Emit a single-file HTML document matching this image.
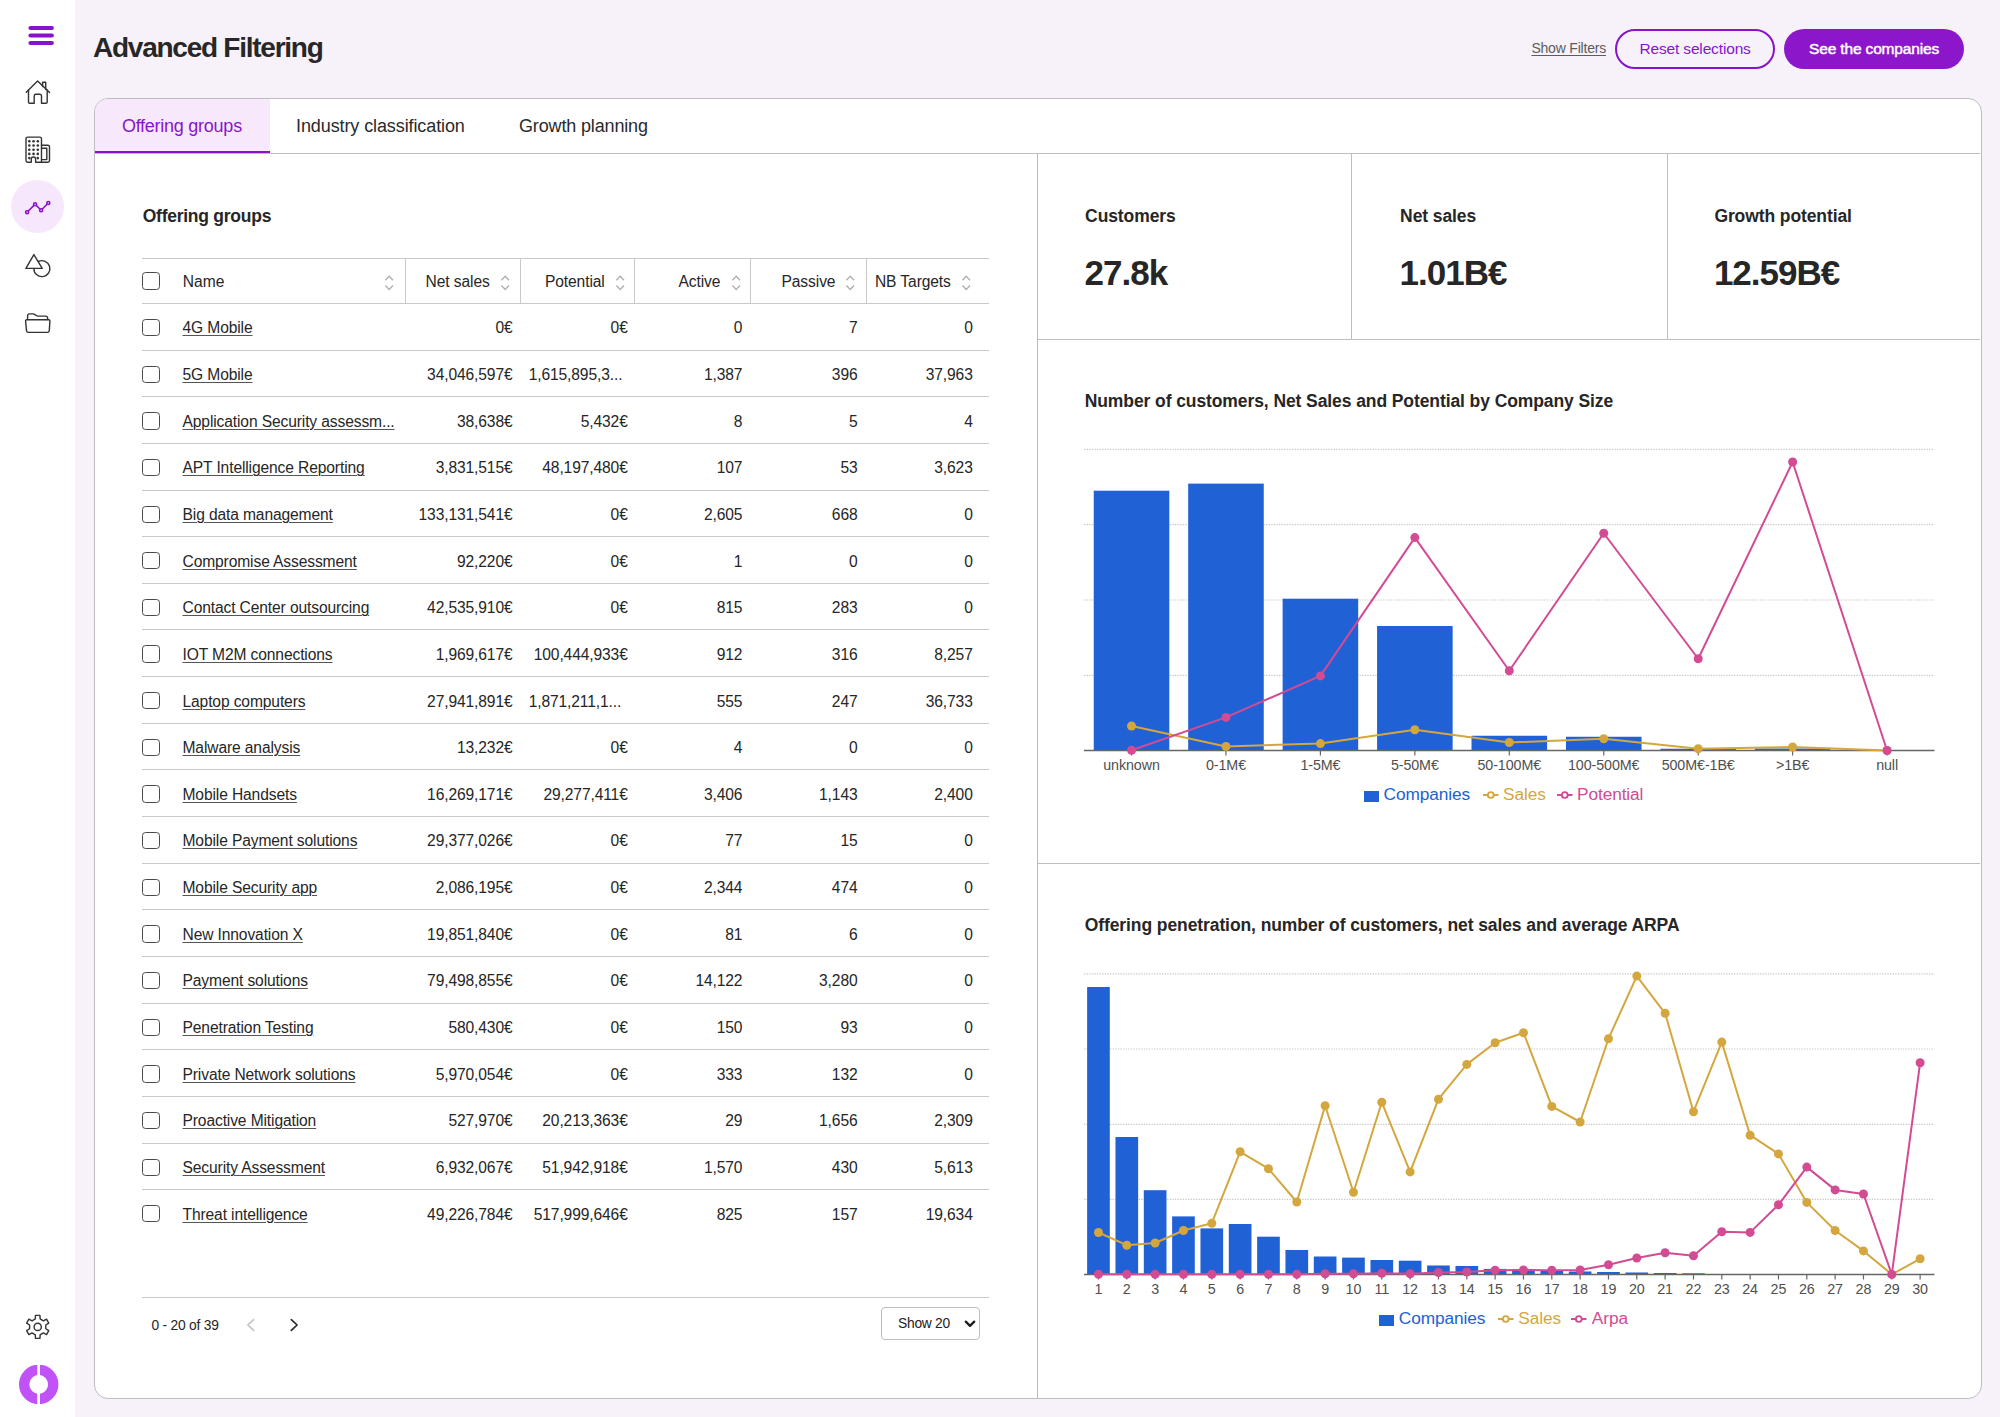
<!DOCTYPE html>
<html><head><meta charset="utf-8"><title>Advanced Filtering</title>
<style>
html,body{margin:0;padding:0;}
body{width:2000px;height:1417px;overflow:hidden;position:relative;background:#f7f2f9;font-family:"Liberation Sans", sans-serif;color:#262626;}
.u{text-decoration:underline;text-decoration-thickness:1.3px;text-underline-offset:2px;}
</style></head><body>

<div style="position:absolute;left:0;top:0;width:75px;height:1417px;background:#ffffff"></div>
<svg style="position:absolute;left:0;top:0" width="75" height="360" viewBox="0 0 75 360">
<g stroke="#8714cc" stroke-width="4.2" stroke-linecap="round">
<line x1="30.5" y1="28" x2="51.8" y2="28"/><line x1="30.5" y1="35.5" x2="51.8" y2="35.5"/><line x1="30.5" y1="43" x2="51.8" y2="43"/>
</g>
<g fill="none" stroke="#333" stroke-width="1.4" stroke-linejoin="round" stroke-linecap="round">
<!-- home -->
<path d="M26.3 92.2 L37.6 81 L49.6 92.5"/>
<path d="M28.5 90 V102 q0 1.2 1.2 1.2 H34.2 V96 q0 -1.7 1.7 -1.7 H39.8 q1.7 0 1.7 1.7 V103.2 H46 q1.2 0 1.2 -1.2 V90"/>
<path d="M42.6 86.6 V82.3 H45.7 V89.6"/>
<!-- building -->
<path d="M31.3 162.3 H27.7 q-1.7 0 -1.7 -1.7 V138.8 q0 -1.7 1.7 -1.7 H39.8 q1.7 0 1.7 1.7 V162.3 H35.6 V159.2 a2.15 2.15 0 0 0 -4.3 0 Z"/>
<path d="M41.5 145.3 H47.8 q1.7 0 1.7 1.7 V160.6 q0 1.7 -1.7 1.7 H41.5"/>
<path d="M41.5 148.3 H46.8 V159.6 H41.5"/>
<!-- shapes -->
<path d="M33.9 254.6 L42.2 268.4 H25.9 Z"/>
<path d="M33.9 268.4 A8 8 0 1 0 38.3 261.5"/>
<!-- folder -->
<path d="M27.6 319.6 V315.7 q0 -1.8 1.8 -1.8 H33 q1.2 0 2 0.7 l1.2 0.9 q0.8 0.6 1.8 0.6 H45.8 q1.8 0 1.8 1.8 V319.6"/>
<path d="M26.6 319.8 H48.8 q1.2 0 1.1 1.2 L49.3 330.6 q-0.2 1.8 -2 1.8 H28.5 q-1.8 0 -2 -1.8 L25.6 321 q-0.1 -1.2 1 -1.2 Z"/>
</g>
<g fill="#333">

<circle cx="29.30" cy="141.30" r="1.3"/>
<circle cx="33.55" cy="141.30" r="1.3"/>
<circle cx="37.80" cy="141.30" r="1.3"/>
<circle cx="29.30" cy="145.50" r="1.3"/>
<circle cx="33.55" cy="145.50" r="1.3"/>
<circle cx="37.80" cy="145.50" r="1.3"/>
<circle cx="29.30" cy="149.70" r="1.3"/>
<circle cx="33.55" cy="149.70" r="1.3"/>
<circle cx="37.80" cy="149.70" r="1.3"/>
<circle cx="29.30" cy="153.90" r="1.3"/>
<circle cx="33.55" cy="153.90" r="1.3"/>
<circle cx="37.80" cy="153.90" r="1.3"/>
<circle cx="29.30" cy="158.10" r="1.3"/>
<circle cx="37.80" cy="158.10" r="1.3"/>
</g>
</svg>
<div style="position:absolute;left:11px;top:180px;width:53.4px;height:53.4px;border-radius:50%;background:#f6e7fc"></div>
<svg style="position:absolute;left:0;top:180" width="75" height="60" viewBox="0 180 75 60">
<g fill="none" stroke="#8714cc" stroke-width="1.6">
<polyline points="27.1,212.3 35.1,204.2 41.1,210.2 48.3,203"/>
<circle cx="27.1" cy="212.3" r="1.5" fill="#f6e7fc"/><circle cx="35.1" cy="204.2" r="1.5" fill="#f6e7fc"/><circle cx="41.1" cy="210.2" r="1.5" fill="#f6e7fc"/><circle cx="48.3" cy="203" r="1.5" fill="#f6e7fc"/>
</g></svg>
<svg style="position:absolute;left:0;top:1290px" width="75" height="127" viewBox="0 1290 75 127">
<path d="M35.27 1318.96 L35.47 1315.41 L39.93 1315.41 L40.13 1318.96 L43.36 1320.83 L46.53 1319.22 L48.76 1323.09 L45.79 1325.03 L45.79 1328.77 L48.76 1330.71 L46.53 1334.58 L43.36 1332.97 L40.13 1334.84 L39.93 1338.39 L35.47 1338.39 L35.27 1334.84 L32.04 1332.97 L28.87 1334.58 L26.64 1330.71 L29.61 1328.77 L29.61 1325.03 L26.64 1323.09 L28.87 1319.22 L32.04 1320.83 Z" fill="none" stroke="#333" stroke-width="1.4" stroke-linejoin="round"/>
<circle cx="37.7" cy="1326.9" r="3.6" fill="none" stroke="#333" stroke-width="1.4"/>
<path fill-rule="evenodd" fill="#c152f7" d="M38.7 1364.7 a19.7 19.7 0 1 0 0.001 0 Z M38.7 1375.1 a9.3 9.3 0 1 1 -0.001 0 Z"/>
<rect x="37.3" y="1362" width="2.7" height="44" fill="#ffffff"/>
</svg>
<div style="position:absolute;top:34.00px;font-size:28px;line-height:28px;font-weight:700;color:#272727;white-space:nowrap;letter-spacing:-1.25px;left:93.00px;">Advanced Filtering</div>
<div style="position:absolute;top:41.35px;font-size:14px;line-height:14px;font-weight:400;color:#5c5c5c;white-space:nowrap;letter-spacing:-0.2px;left:1531.40px;text-decoration:underline;text-underline-offset:2px;">Show Filters</div>
<div style="position:absolute;left:1614.7px;top:28.8px;width:160.8px;height:40px;box-sizing:border-box;border:2px solid #8714cc;border-radius:20px"></div>
<div style="position:absolute;top:41.38px;font-size:15.5px;line-height:15.5px;font-weight:400;color:#8714cc;white-space:nowrap;letter-spacing:-0.15px;left:1639.40px;">Reset selections</div>
<div style="position:absolute;left:1784.4px;top:28.6px;width:179.9px;height:40.3px;border-radius:20.2px;background:#8c17ca"></div>
<div style="position:absolute;top:41.38px;font-size:15.5px;line-height:15.5px;font-weight:400;color:#ffffff;white-space:nowrap;letter-spacing:-0.15px;left:1809.00px;-webkit-text-stroke:0.45px #ffffff;">See the companies</div>
<div style="position:absolute;left:93.6px;top:98.3px;width:1888px;height:1300.6px;box-sizing:border-box;border:1.5px solid #bdbdbd;border-radius:14px;background:#fff;overflow:hidden"><div style="position:absolute;left:0;top:0;width:175px;height:52px;background:#f7e8fc"></div><div style="position:absolute;left:0;top:51.8px;width:175.4px;height:3.2px;background:#8714cc"></div></div>
<div style="position:absolute;left:94px;top:153px;width:1886px;height:1px;background:#bdbdbd"></div>
<div style="position:absolute;left:1037px;top:154px;width:1px;height:1244px;background:#bdbdbd"></div>
<div style="position:absolute;top:116.56px;font-size:18px;line-height:18px;font-weight:400;color:#8714cc;white-space:nowrap;letter-spacing:-0.25px;left:121.90px;">Offering groups</div>
<div style="position:absolute;top:116.76px;font-size:18px;line-height:18px;font-weight:400;color:#2a2a2a;white-space:nowrap;letter-spacing:-0.1px;left:296.00px;">Industry classification</div>
<div style="position:absolute;top:116.76px;font-size:18px;line-height:18px;font-weight:400;color:#2a2a2a;white-space:nowrap;letter-spacing:-0.15px;left:519.00px;">Growth planning</div>
<div style="position:absolute;top:208.49px;font-size:17.5px;line-height:17.5px;font-weight:700;color:#262626;white-space:nowrap;letter-spacing:-0.25px;left:142.70px;">Offering groups</div>
<div style="position:absolute;left:142px;top:258px;width:847px;height:1px;background:#c9c9c9"></div>
<div style="position:absolute;left:142px;top:303px;width:847px;height:1px;background:#c9c9c9"></div>
<div style="position:absolute;left:405px;top:259px;width:1px;height:44px;background:#c9c9c9"></div>
<div style="position:absolute;left:520px;top:259px;width:1px;height:44px;background:#c9c9c9"></div>
<div style="position:absolute;left:634px;top:259px;width:1px;height:44px;background:#c9c9c9"></div>
<div style="position:absolute;left:750px;top:259px;width:1px;height:44px;background:#c9c9c9"></div>
<div style="position:absolute;left:866px;top:259px;width:1px;height:44px;background:#c9c9c9"></div>
<div style="position:absolute;left:142.10px;top:272.30px;width:17.5px;height:17.3px;box-sizing:border-box;border:1.6px solid #4a4a4a;border-radius:3.5px;background:#fff"></div>
<div style="position:absolute;top:273.79px;font-size:15.6px;line-height:15.6px;font-weight:400;color:#262626;white-space:nowrap;left:182.80px;">Name</div>
<svg style="position:absolute;left:383.60px;top:275.10px" width="11" height="17" viewBox="-1 -1 11 17"><g fill="none" stroke="#b0b0b0" stroke-width="1.4"><polyline points="0.4,4.2 4.2,0.3 8,4.2"/><polyline points="0.4,9.6 4.2,13.6 8,9.6"/></g></svg>
<div style="position:absolute;top:273.79px;font-size:15.6px;line-height:15.6px;font-weight:400;color:#262626;white-space:nowrap;letter-spacing:-0.1px;right:1510.30px;text-align:right;">Net sales</div>
<svg style="position:absolute;left:499.60px;top:275.10px" width="11" height="17" viewBox="-1 -1 11 17"><g fill="none" stroke="#b0b0b0" stroke-width="1.4"><polyline points="0.4,4.2 4.2,0.3 8,4.2"/><polyline points="0.4,9.6 4.2,13.6 8,9.6"/></g></svg>
<div style="position:absolute;top:273.79px;font-size:15.6px;line-height:15.6px;font-weight:400;color:#262626;white-space:nowrap;letter-spacing:-0.1px;right:1395.30px;text-align:right;">Potential</div>
<svg style="position:absolute;left:615.10px;top:275.10px" width="11" height="17" viewBox="-1 -1 11 17"><g fill="none" stroke="#b0b0b0" stroke-width="1.4"><polyline points="0.4,4.2 4.2,0.3 8,4.2"/><polyline points="0.4,9.6 4.2,13.6 8,9.6"/></g></svg>
<div style="position:absolute;top:273.79px;font-size:15.6px;line-height:15.6px;font-weight:400;color:#262626;white-space:nowrap;letter-spacing:-0.1px;right:1279.70px;text-align:right;">Active</div>
<svg style="position:absolute;left:730.60px;top:275.10px" width="11" height="17" viewBox="-1 -1 11 17"><g fill="none" stroke="#b0b0b0" stroke-width="1.4"><polyline points="0.4,4.2 4.2,0.3 8,4.2"/><polyline points="0.4,9.6 4.2,13.6 8,9.6"/></g></svg>
<div style="position:absolute;top:273.79px;font-size:15.6px;line-height:15.6px;font-weight:400;color:#262626;white-space:nowrap;letter-spacing:-0.1px;right:1164.60px;text-align:right;">Passive</div>
<svg style="position:absolute;left:845.20px;top:275.10px" width="11" height="17" viewBox="-1 -1 11 17"><g fill="none" stroke="#b0b0b0" stroke-width="1.4"><polyline points="0.4,4.2 4.2,0.3 8,4.2"/><polyline points="0.4,9.6 4.2,13.6 8,9.6"/></g></svg>
<div style="position:absolute;top:273.79px;font-size:15.6px;line-height:15.6px;font-weight:400;color:#262626;white-space:nowrap;letter-spacing:-0.1px;right:1049.20px;text-align:right;">NB Targets</div>
<svg style="position:absolute;left:960.70px;top:275.10px" width="11" height="17" viewBox="-1 -1 11 17"><g fill="none" stroke="#b0b0b0" stroke-width="1.4"><polyline points="0.4,4.2 4.2,0.3 8,4.2"/><polyline points="0.4,9.6 4.2,13.6 8,9.6"/></g></svg>
<div style="position:absolute;left:142.10px;top:319.00px;width:17.5px;height:17.3px;box-sizing:border-box;border:1.6px solid #4a4a4a;border-radius:3.5px;background:#fff"></div>
<div style="position:absolute;top:320.39px;font-size:15.6px;line-height:15.6px;font-weight:400;color:#262626;white-space:nowrap;letter-spacing:-0.12px;left:182.50px;text-decoration:underline;text-decoration-thickness:1.3px;text-underline-offset:1.5px;text-decoration-color:#555;">4G Mobile</div>
<div style="position:absolute;top:320.39px;font-size:15.6px;line-height:15.6px;font-weight:400;color:#262626;white-space:nowrap;letter-spacing:-0.12px;right:1487.50px;text-align:right;">0€</div>
<div style="position:absolute;top:320.39px;font-size:15.6px;line-height:15.6px;font-weight:400;color:#262626;white-space:nowrap;letter-spacing:-0.12px;right:1372.30px;text-align:right;">0€</div>
<div style="position:absolute;top:320.39px;font-size:15.6px;line-height:15.6px;font-weight:400;color:#262626;white-space:nowrap;letter-spacing:-0.12px;right:1257.60px;text-align:right;">0</div>
<div style="position:absolute;top:320.39px;font-size:15.6px;line-height:15.6px;font-weight:400;color:#262626;white-space:nowrap;letter-spacing:-0.12px;right:1142.50px;text-align:right;">7</div>
<div style="position:absolute;top:320.39px;font-size:15.6px;line-height:15.6px;font-weight:400;color:#262626;white-space:nowrap;letter-spacing:-0.12px;right:1027.30px;text-align:right;">0</div>
<div style="position:absolute;left:142px;top:350px;width:847px;height:1px;background:#c9c9c9"></div>
<div style="position:absolute;left:142.10px;top:365.64px;width:17.5px;height:17.3px;box-sizing:border-box;border:1.6px solid #4a4a4a;border-radius:3.5px;background:#fff"></div>
<div style="position:absolute;top:367.03px;font-size:15.6px;line-height:15.6px;font-weight:400;color:#262626;white-space:nowrap;letter-spacing:-0.12px;left:182.50px;text-decoration:underline;text-decoration-thickness:1.3px;text-underline-offset:1.5px;text-decoration-color:#555;">5G Mobile</div>
<div style="position:absolute;top:367.03px;font-size:15.6px;line-height:15.6px;font-weight:400;color:#262626;white-space:nowrap;letter-spacing:-0.12px;right:1487.50px;text-align:right;">34,046,597€</div>
<div style="position:absolute;top:367.03px;font-size:15.6px;line-height:15.6px;font-weight:400;color:#262626;white-space:nowrap;letter-spacing:-0.12px;left:528.70px;">1,615,895,3...</div>
<div style="position:absolute;top:367.03px;font-size:15.6px;line-height:15.6px;font-weight:400;color:#262626;white-space:nowrap;letter-spacing:-0.12px;right:1257.60px;text-align:right;">1,387</div>
<div style="position:absolute;top:367.03px;font-size:15.6px;line-height:15.6px;font-weight:400;color:#262626;white-space:nowrap;letter-spacing:-0.12px;right:1142.50px;text-align:right;">396</div>
<div style="position:absolute;top:367.03px;font-size:15.6px;line-height:15.6px;font-weight:400;color:#262626;white-space:nowrap;letter-spacing:-0.12px;right:1027.30px;text-align:right;">37,963</div>
<div style="position:absolute;left:142px;top:396px;width:847px;height:1px;background:#c9c9c9"></div>
<div style="position:absolute;left:142.10px;top:412.28px;width:17.5px;height:17.3px;box-sizing:border-box;border:1.6px solid #4a4a4a;border-radius:3.5px;background:#fff"></div>
<div style="position:absolute;top:413.67px;font-size:15.6px;line-height:15.6px;font-weight:400;color:#262626;white-space:nowrap;letter-spacing:-0.12px;left:182.50px;text-decoration:underline;text-decoration-thickness:1.3px;text-underline-offset:1.5px;text-decoration-color:#555;">Application Security assessm...</div>
<div style="position:absolute;top:413.67px;font-size:15.6px;line-height:15.6px;font-weight:400;color:#262626;white-space:nowrap;letter-spacing:-0.12px;right:1487.50px;text-align:right;">38,638€</div>
<div style="position:absolute;top:413.67px;font-size:15.6px;line-height:15.6px;font-weight:400;color:#262626;white-space:nowrap;letter-spacing:-0.12px;right:1372.30px;text-align:right;">5,432€</div>
<div style="position:absolute;top:413.67px;font-size:15.6px;line-height:15.6px;font-weight:400;color:#262626;white-space:nowrap;letter-spacing:-0.12px;right:1257.60px;text-align:right;">8</div>
<div style="position:absolute;top:413.67px;font-size:15.6px;line-height:15.6px;font-weight:400;color:#262626;white-space:nowrap;letter-spacing:-0.12px;right:1142.50px;text-align:right;">5</div>
<div style="position:absolute;top:413.67px;font-size:15.6px;line-height:15.6px;font-weight:400;color:#262626;white-space:nowrap;letter-spacing:-0.12px;right:1027.30px;text-align:right;">4</div>
<div style="position:absolute;left:142px;top:443px;width:847px;height:1px;background:#c9c9c9"></div>
<div style="position:absolute;left:142.10px;top:458.92px;width:17.5px;height:17.3px;box-sizing:border-box;border:1.6px solid #4a4a4a;border-radius:3.5px;background:#fff"></div>
<div style="position:absolute;top:460.31px;font-size:15.6px;line-height:15.6px;font-weight:400;color:#262626;white-space:nowrap;letter-spacing:-0.12px;left:182.50px;text-decoration:underline;text-decoration-thickness:1.3px;text-underline-offset:1.5px;text-decoration-color:#555;">APT Intelligence Reporting</div>
<div style="position:absolute;top:460.31px;font-size:15.6px;line-height:15.6px;font-weight:400;color:#262626;white-space:nowrap;letter-spacing:-0.12px;right:1487.50px;text-align:right;">3,831,515€</div>
<div style="position:absolute;top:460.31px;font-size:15.6px;line-height:15.6px;font-weight:400;color:#262626;white-space:nowrap;letter-spacing:-0.12px;right:1372.30px;text-align:right;">48,197,480€</div>
<div style="position:absolute;top:460.31px;font-size:15.6px;line-height:15.6px;font-weight:400;color:#262626;white-space:nowrap;letter-spacing:-0.12px;right:1257.60px;text-align:right;">107</div>
<div style="position:absolute;top:460.31px;font-size:15.6px;line-height:15.6px;font-weight:400;color:#262626;white-space:nowrap;letter-spacing:-0.12px;right:1142.50px;text-align:right;">53</div>
<div style="position:absolute;top:460.31px;font-size:15.6px;line-height:15.6px;font-weight:400;color:#262626;white-space:nowrap;letter-spacing:-0.12px;right:1027.30px;text-align:right;">3,623</div>
<div style="position:absolute;left:142px;top:490px;width:847px;height:1px;background:#c9c9c9"></div>
<div style="position:absolute;left:142.10px;top:505.56px;width:17.5px;height:17.3px;box-sizing:border-box;border:1.6px solid #4a4a4a;border-radius:3.5px;background:#fff"></div>
<div style="position:absolute;top:506.95px;font-size:15.6px;line-height:15.6px;font-weight:400;color:#262626;white-space:nowrap;letter-spacing:-0.12px;left:182.50px;text-decoration:underline;text-decoration-thickness:1.3px;text-underline-offset:1.5px;text-decoration-color:#555;">Big data management</div>
<div style="position:absolute;top:506.95px;font-size:15.6px;line-height:15.6px;font-weight:400;color:#262626;white-space:nowrap;letter-spacing:-0.12px;right:1487.50px;text-align:right;">133,131,541€</div>
<div style="position:absolute;top:506.95px;font-size:15.6px;line-height:15.6px;font-weight:400;color:#262626;white-space:nowrap;letter-spacing:-0.12px;right:1372.30px;text-align:right;">0€</div>
<div style="position:absolute;top:506.95px;font-size:15.6px;line-height:15.6px;font-weight:400;color:#262626;white-space:nowrap;letter-spacing:-0.12px;right:1257.60px;text-align:right;">2,605</div>
<div style="position:absolute;top:506.95px;font-size:15.6px;line-height:15.6px;font-weight:400;color:#262626;white-space:nowrap;letter-spacing:-0.12px;right:1142.50px;text-align:right;">668</div>
<div style="position:absolute;top:506.95px;font-size:15.6px;line-height:15.6px;font-weight:400;color:#262626;white-space:nowrap;letter-spacing:-0.12px;right:1027.30px;text-align:right;">0</div>
<div style="position:absolute;left:142px;top:536px;width:847px;height:1px;background:#c9c9c9"></div>
<div style="position:absolute;left:142.10px;top:552.20px;width:17.5px;height:17.3px;box-sizing:border-box;border:1.6px solid #4a4a4a;border-radius:3.5px;background:#fff"></div>
<div style="position:absolute;top:553.59px;font-size:15.6px;line-height:15.6px;font-weight:400;color:#262626;white-space:nowrap;letter-spacing:-0.12px;left:182.50px;text-decoration:underline;text-decoration-thickness:1.3px;text-underline-offset:1.5px;text-decoration-color:#555;">Compromise Assessment</div>
<div style="position:absolute;top:553.59px;font-size:15.6px;line-height:15.6px;font-weight:400;color:#262626;white-space:nowrap;letter-spacing:-0.12px;right:1487.50px;text-align:right;">92,220€</div>
<div style="position:absolute;top:553.59px;font-size:15.6px;line-height:15.6px;font-weight:400;color:#262626;white-space:nowrap;letter-spacing:-0.12px;right:1372.30px;text-align:right;">0€</div>
<div style="position:absolute;top:553.59px;font-size:15.6px;line-height:15.6px;font-weight:400;color:#262626;white-space:nowrap;letter-spacing:-0.12px;right:1257.60px;text-align:right;">1</div>
<div style="position:absolute;top:553.59px;font-size:15.6px;line-height:15.6px;font-weight:400;color:#262626;white-space:nowrap;letter-spacing:-0.12px;right:1142.50px;text-align:right;">0</div>
<div style="position:absolute;top:553.59px;font-size:15.6px;line-height:15.6px;font-weight:400;color:#262626;white-space:nowrap;letter-spacing:-0.12px;right:1027.30px;text-align:right;">0</div>
<div style="position:absolute;left:142px;top:583px;width:847px;height:1px;background:#c9c9c9"></div>
<div style="position:absolute;left:142.10px;top:598.84px;width:17.5px;height:17.3px;box-sizing:border-box;border:1.6px solid #4a4a4a;border-radius:3.5px;background:#fff"></div>
<div style="position:absolute;top:600.23px;font-size:15.6px;line-height:15.6px;font-weight:400;color:#262626;white-space:nowrap;letter-spacing:-0.12px;left:182.50px;text-decoration:underline;text-decoration-thickness:1.3px;text-underline-offset:1.5px;text-decoration-color:#555;">Contact Center outsourcing</div>
<div style="position:absolute;top:600.23px;font-size:15.6px;line-height:15.6px;font-weight:400;color:#262626;white-space:nowrap;letter-spacing:-0.12px;right:1487.50px;text-align:right;">42,535,910€</div>
<div style="position:absolute;top:600.23px;font-size:15.6px;line-height:15.6px;font-weight:400;color:#262626;white-space:nowrap;letter-spacing:-0.12px;right:1372.30px;text-align:right;">0€</div>
<div style="position:absolute;top:600.23px;font-size:15.6px;line-height:15.6px;font-weight:400;color:#262626;white-space:nowrap;letter-spacing:-0.12px;right:1257.60px;text-align:right;">815</div>
<div style="position:absolute;top:600.23px;font-size:15.6px;line-height:15.6px;font-weight:400;color:#262626;white-space:nowrap;letter-spacing:-0.12px;right:1142.50px;text-align:right;">283</div>
<div style="position:absolute;top:600.23px;font-size:15.6px;line-height:15.6px;font-weight:400;color:#262626;white-space:nowrap;letter-spacing:-0.12px;right:1027.30px;text-align:right;">0</div>
<div style="position:absolute;left:142px;top:629px;width:847px;height:1px;background:#c9c9c9"></div>
<div style="position:absolute;left:142.10px;top:645.48px;width:17.5px;height:17.3px;box-sizing:border-box;border:1.6px solid #4a4a4a;border-radius:3.5px;background:#fff"></div>
<div style="position:absolute;top:646.87px;font-size:15.6px;line-height:15.6px;font-weight:400;color:#262626;white-space:nowrap;letter-spacing:-0.12px;left:182.50px;text-decoration:underline;text-decoration-thickness:1.3px;text-underline-offset:1.5px;text-decoration-color:#555;">IOT M2M connections</div>
<div style="position:absolute;top:646.87px;font-size:15.6px;line-height:15.6px;font-weight:400;color:#262626;white-space:nowrap;letter-spacing:-0.12px;right:1487.50px;text-align:right;">1,969,617€</div>
<div style="position:absolute;top:646.87px;font-size:15.6px;line-height:15.6px;font-weight:400;color:#262626;white-space:nowrap;letter-spacing:-0.12px;right:1372.30px;text-align:right;">100,444,933€</div>
<div style="position:absolute;top:646.87px;font-size:15.6px;line-height:15.6px;font-weight:400;color:#262626;white-space:nowrap;letter-spacing:-0.12px;right:1257.60px;text-align:right;">912</div>
<div style="position:absolute;top:646.87px;font-size:15.6px;line-height:15.6px;font-weight:400;color:#262626;white-space:nowrap;letter-spacing:-0.12px;right:1142.50px;text-align:right;">316</div>
<div style="position:absolute;top:646.87px;font-size:15.6px;line-height:15.6px;font-weight:400;color:#262626;white-space:nowrap;letter-spacing:-0.12px;right:1027.30px;text-align:right;">8,257</div>
<div style="position:absolute;left:142px;top:676px;width:847px;height:1px;background:#c9c9c9"></div>
<div style="position:absolute;left:142.10px;top:692.12px;width:17.5px;height:17.3px;box-sizing:border-box;border:1.6px solid #4a4a4a;border-radius:3.5px;background:#fff"></div>
<div style="position:absolute;top:693.51px;font-size:15.6px;line-height:15.6px;font-weight:400;color:#262626;white-space:nowrap;letter-spacing:-0.12px;left:182.50px;text-decoration:underline;text-decoration-thickness:1.3px;text-underline-offset:1.5px;text-decoration-color:#555;">Laptop computers</div>
<div style="position:absolute;top:693.51px;font-size:15.6px;line-height:15.6px;font-weight:400;color:#262626;white-space:nowrap;letter-spacing:-0.12px;right:1487.50px;text-align:right;">27,941,891€</div>
<div style="position:absolute;top:693.51px;font-size:15.6px;line-height:15.6px;font-weight:400;color:#262626;white-space:nowrap;letter-spacing:-0.12px;left:528.70px;">1,871,211,1...</div>
<div style="position:absolute;top:693.51px;font-size:15.6px;line-height:15.6px;font-weight:400;color:#262626;white-space:nowrap;letter-spacing:-0.12px;right:1257.60px;text-align:right;">555</div>
<div style="position:absolute;top:693.51px;font-size:15.6px;line-height:15.6px;font-weight:400;color:#262626;white-space:nowrap;letter-spacing:-0.12px;right:1142.50px;text-align:right;">247</div>
<div style="position:absolute;top:693.51px;font-size:15.6px;line-height:15.6px;font-weight:400;color:#262626;white-space:nowrap;letter-spacing:-0.12px;right:1027.30px;text-align:right;">36,733</div>
<div style="position:absolute;left:142px;top:723px;width:847px;height:1px;background:#c9c9c9"></div>
<div style="position:absolute;left:142.10px;top:738.76px;width:17.5px;height:17.3px;box-sizing:border-box;border:1.6px solid #4a4a4a;border-radius:3.5px;background:#fff"></div>
<div style="position:absolute;top:740.15px;font-size:15.6px;line-height:15.6px;font-weight:400;color:#262626;white-space:nowrap;letter-spacing:-0.12px;left:182.50px;text-decoration:underline;text-decoration-thickness:1.3px;text-underline-offset:1.5px;text-decoration-color:#555;">Malware analysis</div>
<div style="position:absolute;top:740.15px;font-size:15.6px;line-height:15.6px;font-weight:400;color:#262626;white-space:nowrap;letter-spacing:-0.12px;right:1487.50px;text-align:right;">13,232€</div>
<div style="position:absolute;top:740.15px;font-size:15.6px;line-height:15.6px;font-weight:400;color:#262626;white-space:nowrap;letter-spacing:-0.12px;right:1372.30px;text-align:right;">0€</div>
<div style="position:absolute;top:740.15px;font-size:15.6px;line-height:15.6px;font-weight:400;color:#262626;white-space:nowrap;letter-spacing:-0.12px;right:1257.60px;text-align:right;">4</div>
<div style="position:absolute;top:740.15px;font-size:15.6px;line-height:15.6px;font-weight:400;color:#262626;white-space:nowrap;letter-spacing:-0.12px;right:1142.50px;text-align:right;">0</div>
<div style="position:absolute;top:740.15px;font-size:15.6px;line-height:15.6px;font-weight:400;color:#262626;white-space:nowrap;letter-spacing:-0.12px;right:1027.30px;text-align:right;">0</div>
<div style="position:absolute;left:142px;top:769px;width:847px;height:1px;background:#c9c9c9"></div>
<div style="position:absolute;left:142.10px;top:785.40px;width:17.5px;height:17.3px;box-sizing:border-box;border:1.6px solid #4a4a4a;border-radius:3.5px;background:#fff"></div>
<div style="position:absolute;top:786.79px;font-size:15.6px;line-height:15.6px;font-weight:400;color:#262626;white-space:nowrap;letter-spacing:-0.12px;left:182.50px;text-decoration:underline;text-decoration-thickness:1.3px;text-underline-offset:1.5px;text-decoration-color:#555;">Mobile Handsets</div>
<div style="position:absolute;top:786.79px;font-size:15.6px;line-height:15.6px;font-weight:400;color:#262626;white-space:nowrap;letter-spacing:-0.12px;right:1487.50px;text-align:right;">16,269,171€</div>
<div style="position:absolute;top:786.79px;font-size:15.6px;line-height:15.6px;font-weight:400;color:#262626;white-space:nowrap;letter-spacing:-0.12px;right:1372.30px;text-align:right;">29,277,411€</div>
<div style="position:absolute;top:786.79px;font-size:15.6px;line-height:15.6px;font-weight:400;color:#262626;white-space:nowrap;letter-spacing:-0.12px;right:1257.60px;text-align:right;">3,406</div>
<div style="position:absolute;top:786.79px;font-size:15.6px;line-height:15.6px;font-weight:400;color:#262626;white-space:nowrap;letter-spacing:-0.12px;right:1142.50px;text-align:right;">1,143</div>
<div style="position:absolute;top:786.79px;font-size:15.6px;line-height:15.6px;font-weight:400;color:#262626;white-space:nowrap;letter-spacing:-0.12px;right:1027.30px;text-align:right;">2,400</div>
<div style="position:absolute;left:142px;top:816px;width:847px;height:1px;background:#c9c9c9"></div>
<div style="position:absolute;left:142.10px;top:832.04px;width:17.5px;height:17.3px;box-sizing:border-box;border:1.6px solid #4a4a4a;border-radius:3.5px;background:#fff"></div>
<div style="position:absolute;top:833.43px;font-size:15.6px;line-height:15.6px;font-weight:400;color:#262626;white-space:nowrap;letter-spacing:-0.12px;left:182.50px;text-decoration:underline;text-decoration-thickness:1.3px;text-underline-offset:1.5px;text-decoration-color:#555;">Mobile Payment solutions</div>
<div style="position:absolute;top:833.43px;font-size:15.6px;line-height:15.6px;font-weight:400;color:#262626;white-space:nowrap;letter-spacing:-0.12px;right:1487.50px;text-align:right;">29,377,026€</div>
<div style="position:absolute;top:833.43px;font-size:15.6px;line-height:15.6px;font-weight:400;color:#262626;white-space:nowrap;letter-spacing:-0.12px;right:1372.30px;text-align:right;">0€</div>
<div style="position:absolute;top:833.43px;font-size:15.6px;line-height:15.6px;font-weight:400;color:#262626;white-space:nowrap;letter-spacing:-0.12px;right:1257.60px;text-align:right;">77</div>
<div style="position:absolute;top:833.43px;font-size:15.6px;line-height:15.6px;font-weight:400;color:#262626;white-space:nowrap;letter-spacing:-0.12px;right:1142.50px;text-align:right;">15</div>
<div style="position:absolute;top:833.43px;font-size:15.6px;line-height:15.6px;font-weight:400;color:#262626;white-space:nowrap;letter-spacing:-0.12px;right:1027.30px;text-align:right;">0</div>
<div style="position:absolute;left:142px;top:863px;width:847px;height:1px;background:#c9c9c9"></div>
<div style="position:absolute;left:142.10px;top:878.68px;width:17.5px;height:17.3px;box-sizing:border-box;border:1.6px solid #4a4a4a;border-radius:3.5px;background:#fff"></div>
<div style="position:absolute;top:880.07px;font-size:15.6px;line-height:15.6px;font-weight:400;color:#262626;white-space:nowrap;letter-spacing:-0.12px;left:182.50px;text-decoration:underline;text-decoration-thickness:1.3px;text-underline-offset:1.5px;text-decoration-color:#555;">Mobile Security app</div>
<div style="position:absolute;top:880.07px;font-size:15.6px;line-height:15.6px;font-weight:400;color:#262626;white-space:nowrap;letter-spacing:-0.12px;right:1487.50px;text-align:right;">2,086,195€</div>
<div style="position:absolute;top:880.07px;font-size:15.6px;line-height:15.6px;font-weight:400;color:#262626;white-space:nowrap;letter-spacing:-0.12px;right:1372.30px;text-align:right;">0€</div>
<div style="position:absolute;top:880.07px;font-size:15.6px;line-height:15.6px;font-weight:400;color:#262626;white-space:nowrap;letter-spacing:-0.12px;right:1257.60px;text-align:right;">2,344</div>
<div style="position:absolute;top:880.07px;font-size:15.6px;line-height:15.6px;font-weight:400;color:#262626;white-space:nowrap;letter-spacing:-0.12px;right:1142.50px;text-align:right;">474</div>
<div style="position:absolute;top:880.07px;font-size:15.6px;line-height:15.6px;font-weight:400;color:#262626;white-space:nowrap;letter-spacing:-0.12px;right:1027.30px;text-align:right;">0</div>
<div style="position:absolute;left:142px;top:909px;width:847px;height:1px;background:#c9c9c9"></div>
<div style="position:absolute;left:142.10px;top:925.32px;width:17.5px;height:17.3px;box-sizing:border-box;border:1.6px solid #4a4a4a;border-radius:3.5px;background:#fff"></div>
<div style="position:absolute;top:926.71px;font-size:15.6px;line-height:15.6px;font-weight:400;color:#262626;white-space:nowrap;letter-spacing:-0.12px;left:182.50px;text-decoration:underline;text-decoration-thickness:1.3px;text-underline-offset:1.5px;text-decoration-color:#555;">New Innovation X</div>
<div style="position:absolute;top:926.71px;font-size:15.6px;line-height:15.6px;font-weight:400;color:#262626;white-space:nowrap;letter-spacing:-0.12px;right:1487.50px;text-align:right;">19,851,840€</div>
<div style="position:absolute;top:926.71px;font-size:15.6px;line-height:15.6px;font-weight:400;color:#262626;white-space:nowrap;letter-spacing:-0.12px;right:1372.30px;text-align:right;">0€</div>
<div style="position:absolute;top:926.71px;font-size:15.6px;line-height:15.6px;font-weight:400;color:#262626;white-space:nowrap;letter-spacing:-0.12px;right:1257.60px;text-align:right;">81</div>
<div style="position:absolute;top:926.71px;font-size:15.6px;line-height:15.6px;font-weight:400;color:#262626;white-space:nowrap;letter-spacing:-0.12px;right:1142.50px;text-align:right;">6</div>
<div style="position:absolute;top:926.71px;font-size:15.6px;line-height:15.6px;font-weight:400;color:#262626;white-space:nowrap;letter-spacing:-0.12px;right:1027.30px;text-align:right;">0</div>
<div style="position:absolute;left:142px;top:956px;width:847px;height:1px;background:#c9c9c9"></div>
<div style="position:absolute;left:142.10px;top:971.96px;width:17.5px;height:17.3px;box-sizing:border-box;border:1.6px solid #4a4a4a;border-radius:3.5px;background:#fff"></div>
<div style="position:absolute;top:973.35px;font-size:15.6px;line-height:15.6px;font-weight:400;color:#262626;white-space:nowrap;letter-spacing:-0.12px;left:182.50px;text-decoration:underline;text-decoration-thickness:1.3px;text-underline-offset:1.5px;text-decoration-color:#555;">Payment solutions</div>
<div style="position:absolute;top:973.35px;font-size:15.6px;line-height:15.6px;font-weight:400;color:#262626;white-space:nowrap;letter-spacing:-0.12px;right:1487.50px;text-align:right;">79,498,855€</div>
<div style="position:absolute;top:973.35px;font-size:15.6px;line-height:15.6px;font-weight:400;color:#262626;white-space:nowrap;letter-spacing:-0.12px;right:1372.30px;text-align:right;">0€</div>
<div style="position:absolute;top:973.35px;font-size:15.6px;line-height:15.6px;font-weight:400;color:#262626;white-space:nowrap;letter-spacing:-0.12px;right:1257.60px;text-align:right;">14,122</div>
<div style="position:absolute;top:973.35px;font-size:15.6px;line-height:15.6px;font-weight:400;color:#262626;white-space:nowrap;letter-spacing:-0.12px;right:1142.50px;text-align:right;">3,280</div>
<div style="position:absolute;top:973.35px;font-size:15.6px;line-height:15.6px;font-weight:400;color:#262626;white-space:nowrap;letter-spacing:-0.12px;right:1027.30px;text-align:right;">0</div>
<div style="position:absolute;left:142px;top:1003px;width:847px;height:1px;background:#c9c9c9"></div>
<div style="position:absolute;left:142.10px;top:1018.60px;width:17.5px;height:17.3px;box-sizing:border-box;border:1.6px solid #4a4a4a;border-radius:3.5px;background:#fff"></div>
<div style="position:absolute;top:1019.99px;font-size:15.6px;line-height:15.6px;font-weight:400;color:#262626;white-space:nowrap;letter-spacing:-0.12px;left:182.50px;text-decoration:underline;text-decoration-thickness:1.3px;text-underline-offset:1.5px;text-decoration-color:#555;">Penetration Testing</div>
<div style="position:absolute;top:1019.99px;font-size:15.6px;line-height:15.6px;font-weight:400;color:#262626;white-space:nowrap;letter-spacing:-0.12px;right:1487.50px;text-align:right;">580,430€</div>
<div style="position:absolute;top:1019.99px;font-size:15.6px;line-height:15.6px;font-weight:400;color:#262626;white-space:nowrap;letter-spacing:-0.12px;right:1372.30px;text-align:right;">0€</div>
<div style="position:absolute;top:1019.99px;font-size:15.6px;line-height:15.6px;font-weight:400;color:#262626;white-space:nowrap;letter-spacing:-0.12px;right:1257.60px;text-align:right;">150</div>
<div style="position:absolute;top:1019.99px;font-size:15.6px;line-height:15.6px;font-weight:400;color:#262626;white-space:nowrap;letter-spacing:-0.12px;right:1142.50px;text-align:right;">93</div>
<div style="position:absolute;top:1019.99px;font-size:15.6px;line-height:15.6px;font-weight:400;color:#262626;white-space:nowrap;letter-spacing:-0.12px;right:1027.30px;text-align:right;">0</div>
<div style="position:absolute;left:142px;top:1049px;width:847px;height:1px;background:#c9c9c9"></div>
<div style="position:absolute;left:142.10px;top:1065.24px;width:17.5px;height:17.3px;box-sizing:border-box;border:1.6px solid #4a4a4a;border-radius:3.5px;background:#fff"></div>
<div style="position:absolute;top:1066.63px;font-size:15.6px;line-height:15.6px;font-weight:400;color:#262626;white-space:nowrap;letter-spacing:-0.12px;left:182.50px;text-decoration:underline;text-decoration-thickness:1.3px;text-underline-offset:1.5px;text-decoration-color:#555;">Private Network solutions</div>
<div style="position:absolute;top:1066.63px;font-size:15.6px;line-height:15.6px;font-weight:400;color:#262626;white-space:nowrap;letter-spacing:-0.12px;right:1487.50px;text-align:right;">5,970,054€</div>
<div style="position:absolute;top:1066.63px;font-size:15.6px;line-height:15.6px;font-weight:400;color:#262626;white-space:nowrap;letter-spacing:-0.12px;right:1372.30px;text-align:right;">0€</div>
<div style="position:absolute;top:1066.63px;font-size:15.6px;line-height:15.6px;font-weight:400;color:#262626;white-space:nowrap;letter-spacing:-0.12px;right:1257.60px;text-align:right;">333</div>
<div style="position:absolute;top:1066.63px;font-size:15.6px;line-height:15.6px;font-weight:400;color:#262626;white-space:nowrap;letter-spacing:-0.12px;right:1142.50px;text-align:right;">132</div>
<div style="position:absolute;top:1066.63px;font-size:15.6px;line-height:15.6px;font-weight:400;color:#262626;white-space:nowrap;letter-spacing:-0.12px;right:1027.30px;text-align:right;">0</div>
<div style="position:absolute;left:142px;top:1096px;width:847px;height:1px;background:#c9c9c9"></div>
<div style="position:absolute;left:142.10px;top:1111.88px;width:17.5px;height:17.3px;box-sizing:border-box;border:1.6px solid #4a4a4a;border-radius:3.5px;background:#fff"></div>
<div style="position:absolute;top:1113.27px;font-size:15.6px;line-height:15.6px;font-weight:400;color:#262626;white-space:nowrap;letter-spacing:-0.12px;left:182.50px;text-decoration:underline;text-decoration-thickness:1.3px;text-underline-offset:1.5px;text-decoration-color:#555;">Proactive Mitigation</div>
<div style="position:absolute;top:1113.27px;font-size:15.6px;line-height:15.6px;font-weight:400;color:#262626;white-space:nowrap;letter-spacing:-0.12px;right:1487.50px;text-align:right;">527,970€</div>
<div style="position:absolute;top:1113.27px;font-size:15.6px;line-height:15.6px;font-weight:400;color:#262626;white-space:nowrap;letter-spacing:-0.12px;right:1372.30px;text-align:right;">20,213,363€</div>
<div style="position:absolute;top:1113.27px;font-size:15.6px;line-height:15.6px;font-weight:400;color:#262626;white-space:nowrap;letter-spacing:-0.12px;right:1257.60px;text-align:right;">29</div>
<div style="position:absolute;top:1113.27px;font-size:15.6px;line-height:15.6px;font-weight:400;color:#262626;white-space:nowrap;letter-spacing:-0.12px;right:1142.50px;text-align:right;">1,656</div>
<div style="position:absolute;top:1113.27px;font-size:15.6px;line-height:15.6px;font-weight:400;color:#262626;white-space:nowrap;letter-spacing:-0.12px;right:1027.30px;text-align:right;">2,309</div>
<div style="position:absolute;left:142px;top:1143px;width:847px;height:1px;background:#c9c9c9"></div>
<div style="position:absolute;left:142.10px;top:1158.52px;width:17.5px;height:17.3px;box-sizing:border-box;border:1.6px solid #4a4a4a;border-radius:3.5px;background:#fff"></div>
<div style="position:absolute;top:1159.91px;font-size:15.6px;line-height:15.6px;font-weight:400;color:#262626;white-space:nowrap;letter-spacing:-0.12px;left:182.50px;text-decoration:underline;text-decoration-thickness:1.3px;text-underline-offset:1.5px;text-decoration-color:#555;">Security Assessment</div>
<div style="position:absolute;top:1159.91px;font-size:15.6px;line-height:15.6px;font-weight:400;color:#262626;white-space:nowrap;letter-spacing:-0.12px;right:1487.50px;text-align:right;">6,932,067€</div>
<div style="position:absolute;top:1159.91px;font-size:15.6px;line-height:15.6px;font-weight:400;color:#262626;white-space:nowrap;letter-spacing:-0.12px;right:1372.30px;text-align:right;">51,942,918€</div>
<div style="position:absolute;top:1159.91px;font-size:15.6px;line-height:15.6px;font-weight:400;color:#262626;white-space:nowrap;letter-spacing:-0.12px;right:1257.60px;text-align:right;">1,570</div>
<div style="position:absolute;top:1159.91px;font-size:15.6px;line-height:15.6px;font-weight:400;color:#262626;white-space:nowrap;letter-spacing:-0.12px;right:1142.50px;text-align:right;">430</div>
<div style="position:absolute;top:1159.91px;font-size:15.6px;line-height:15.6px;font-weight:400;color:#262626;white-space:nowrap;letter-spacing:-0.12px;right:1027.30px;text-align:right;">5,613</div>
<div style="position:absolute;left:142px;top:1189px;width:847px;height:1px;background:#c9c9c9"></div>
<div style="position:absolute;left:142.10px;top:1205.16px;width:17.5px;height:17.3px;box-sizing:border-box;border:1.6px solid #4a4a4a;border-radius:3.5px;background:#fff"></div>
<div style="position:absolute;top:1206.55px;font-size:15.6px;line-height:15.6px;font-weight:400;color:#262626;white-space:nowrap;letter-spacing:-0.12px;left:182.50px;text-decoration:underline;text-decoration-thickness:1.3px;text-underline-offset:1.5px;text-decoration-color:#555;">Threat intelligence</div>
<div style="position:absolute;top:1206.55px;font-size:15.6px;line-height:15.6px;font-weight:400;color:#262626;white-space:nowrap;letter-spacing:-0.12px;right:1487.50px;text-align:right;">49,226,784€</div>
<div style="position:absolute;top:1206.55px;font-size:15.6px;line-height:15.6px;font-weight:400;color:#262626;white-space:nowrap;letter-spacing:-0.12px;right:1372.30px;text-align:right;">517,999,646€</div>
<div style="position:absolute;top:1206.55px;font-size:15.6px;line-height:15.6px;font-weight:400;color:#262626;white-space:nowrap;letter-spacing:-0.12px;right:1257.60px;text-align:right;">825</div>
<div style="position:absolute;top:1206.55px;font-size:15.6px;line-height:15.6px;font-weight:400;color:#262626;white-space:nowrap;letter-spacing:-0.12px;right:1142.50px;text-align:right;">157</div>
<div style="position:absolute;top:1206.55px;font-size:15.6px;line-height:15.6px;font-weight:400;color:#262626;white-space:nowrap;letter-spacing:-0.12px;right:1027.30px;text-align:right;">19,634</div>
<div style="position:absolute;left:142px;top:1297px;width:847px;height:1px;background:#c9c9c9"></div>
<div style="position:absolute;top:1318.52px;font-size:13.8px;line-height:13.8px;font-weight:400;color:#262626;white-space:nowrap;letter-spacing:-0.2px;left:151.40px;">0 - 20 of 39</div>
<svg style="position:absolute;left:240px;top:1312px" width="70" height="26" viewBox="240 1312 70 26"><g fill="none" stroke-width="1.7" stroke-linecap="round" stroke-linejoin="round"><polyline points="253.6,1319.6 247.8,1325 253.6,1330.4" stroke="#c4c4c4"/><polyline points="291.3,1319.6 297.1,1325 291.3,1330.4" stroke="#2a2a2a"/></g></svg>
<div style="position:absolute;left:881.4px;top:1307.3px;width:98.3px;height:32.6px;box-sizing:border-box;border:1.33px solid #bdbdbd;border-radius:4px;background:#fff"></div>
<div style="position:absolute;top:1316.82px;font-size:13.8px;line-height:13.8px;font-weight:400;color:#222;white-space:nowrap;letter-spacing:-0.25px;left:898.00px;">Show 20</div>
<svg style="position:absolute;left:962px;top:1317px" width="16" height="14" viewBox="962 1317 16 14"><polyline points="965.8,1321.6 970,1325.9 974.2,1321.6" fill="none" stroke="#1e1e1e" stroke-width="2.3" stroke-linecap="round" stroke-linejoin="round"/></svg>
<div style="position:absolute;left:1038px;top:339px;width:942px;height:1px;background:#bdbdbd"></div>
<div style="position:absolute;left:1351px;top:154px;width:1px;height:185px;background:#bdbdbd"></div>
<div style="position:absolute;left:1667px;top:154px;width:1px;height:185px;background:#bdbdbd"></div>
<div style="position:absolute;top:208.09px;font-size:17.5px;line-height:17.5px;font-weight:700;color:#262626;white-space:nowrap;letter-spacing:-0.1px;left:1085.10px;">Customers</div>
<div style="position:absolute;top:255.17px;font-size:35px;line-height:35px;font-weight:700;color:#262626;white-space:nowrap;letter-spacing:-1.0px;left:1084.60px;">27.8k</div>
<div style="position:absolute;top:208.09px;font-size:17.5px;line-height:17.5px;font-weight:700;color:#262626;white-space:nowrap;letter-spacing:-0.1px;left:1400.10px;">Net sales</div>
<div style="position:absolute;top:255.17px;font-size:35px;line-height:35px;font-weight:700;color:#262626;white-space:nowrap;letter-spacing:-1.0px;left:1399.60px;">1.01B€</div>
<div style="position:absolute;top:208.09px;font-size:17.5px;line-height:17.5px;font-weight:700;color:#262626;white-space:nowrap;letter-spacing:-0.1px;left:1714.40px;">Growth potential</div>
<div style="position:absolute;top:255.17px;font-size:35px;line-height:35px;font-weight:700;color:#262626;white-space:nowrap;letter-spacing:-1.0px;left:1713.90px;">12.59B€</div>
<div style="position:absolute;left:1038px;top:863px;width:942px;height:1px;background:#bdbdbd"></div>
<div style="position:absolute;top:392.69px;font-size:17.5px;line-height:17.5px;font-weight:700;color:#262626;white-space:nowrap;letter-spacing:-0.09px;left:1084.70px;">Number of customers, Net Sales and Potential by Company Size</div>
<svg style="position:absolute;left:0;top:0" width="2000" height="1417" viewBox="0 0 2000 1417"><line x1="1084" y1="449.4" x2="1934.5" y2="449.4" stroke="#c8c8c8" stroke-width="1.2" stroke-dasharray="1.3 1.3"/><line x1="1084" y1="524.7" x2="1934.5" y2="524.7" stroke="#c8c8c8" stroke-width="1.2" stroke-dasharray="1.3 1.3"/><line x1="1084" y1="600" x2="1934.5" y2="600" stroke="#c8c8c8" stroke-width="1.2" stroke-dasharray="1.3 1.3"/><line x1="1084" y1="675.3" x2="1934.5" y2="675.3" stroke="#c8c8c8" stroke-width="1.2" stroke-dasharray="1.3 1.3"/><rect x="1093.74" y="490.70" width="75.56" height="259.80" fill="#2161d6"/><rect x="1188.19" y="483.60" width="75.56" height="266.90" fill="#2161d6"/><rect x="1282.63" y="598.70" width="75.56" height="151.80" fill="#2161d6"/><rect x="1377.08" y="626.00" width="75.56" height="124.50" fill="#2161d6"/><rect x="1471.52" y="735.75" width="75.56" height="14.75" fill="#2161d6"/><rect x="1565.97" y="736.75" width="75.56" height="13.75" fill="#2161d6"/><rect x="1660.41" y="748.75" width="75.56" height="1.75" fill="#2161d6"/><rect x="1754.86" y="748.50" width="75.56" height="2.00" fill="#2161d6"/><line x1="1084" y1="750.5" x2="1934.5" y2="750.5" stroke="#666" stroke-width="1.3"/><line x1="1131.52" y1="750.5" x2="1131.52" y2="755.5" stroke="#666" stroke-width="1.2"/><line x1="1225.97" y1="750.5" x2="1225.97" y2="755.5" stroke="#666" stroke-width="1.2"/><line x1="1320.41" y1="750.5" x2="1320.41" y2="755.5" stroke="#666" stroke-width="1.2"/><line x1="1414.86" y1="750.5" x2="1414.86" y2="755.5" stroke="#666" stroke-width="1.2"/><line x1="1509.30" y1="750.5" x2="1509.30" y2="755.5" stroke="#666" stroke-width="1.2"/><line x1="1603.74" y1="750.5" x2="1603.74" y2="755.5" stroke="#666" stroke-width="1.2"/><line x1="1698.19" y1="750.5" x2="1698.19" y2="755.5" stroke="#666" stroke-width="1.2"/><line x1="1792.63" y1="750.5" x2="1792.63" y2="755.5" stroke="#666" stroke-width="1.2"/><line x1="1887.08" y1="750.5" x2="1887.08" y2="755.5" stroke="#666" stroke-width="1.2"/><polyline points="1131.52,726.00 1225.97,746.40 1320.41,743.60 1414.86,729.70 1509.30,742.50 1603.74,738.75 1698.19,748.75 1792.63,747.00 1887.08,750.50" fill="none" stroke="#d4a73e" stroke-width="2" stroke-linejoin="round"/><circle cx="1131.52" cy="726.00" r="4.5" fill="#d4a73e"/><circle cx="1225.97" cy="746.40" r="4.5" fill="#d4a73e"/><circle cx="1320.41" cy="743.60" r="4.5" fill="#d4a73e"/><circle cx="1414.86" cy="729.70" r="4.5" fill="#d4a73e"/><circle cx="1509.30" cy="742.50" r="4.5" fill="#d4a73e"/><circle cx="1603.74" cy="738.75" r="4.5" fill="#d4a73e"/><circle cx="1698.19" cy="748.75" r="4.5" fill="#d4a73e"/><circle cx="1792.63" cy="747.00" r="4.5" fill="#d4a73e"/><circle cx="1887.08" cy="750.50" r="4.5" fill="#d4a73e"/><polyline points="1131.52,750.20 1225.97,717.40 1320.41,675.90 1414.86,537.60 1509.30,670.75 1603.74,533.25 1698.19,658.75 1792.63,462.00 1887.08,750.50" fill="none" stroke="#d24b93" stroke-width="2" stroke-linejoin="round"/><circle cx="1131.52" cy="750.20" r="4.5" fill="#d24b93"/><circle cx="1225.97" cy="717.40" r="4.5" fill="#d24b93"/><circle cx="1320.41" cy="675.90" r="4.5" fill="#d24b93"/><circle cx="1414.86" cy="537.60" r="4.5" fill="#d24b93"/><circle cx="1509.30" cy="670.75" r="4.5" fill="#d24b93"/><circle cx="1603.74" cy="533.25" r="4.5" fill="#d24b93"/><circle cx="1698.19" cy="658.75" r="4.5" fill="#d24b93"/><circle cx="1792.63" cy="462.00" r="4.5" fill="#d24b93"/><circle cx="1887.08" cy="750.50" r="4.5" fill="#d24b93"/></svg>
<div style="position:absolute;top:757.60px;font-size:14.3px;line-height:14.3px;font-weight:400;color:#4f4f4f;white-space:nowrap;letter-spacing:-0.1px;left:1071.52px;width:120px;text-align:center;">unknown</div>
<div style="position:absolute;top:757.60px;font-size:14.3px;line-height:14.3px;font-weight:400;color:#4f4f4f;white-space:nowrap;letter-spacing:-0.1px;left:1165.97px;width:120px;text-align:center;">0-1M€</div>
<div style="position:absolute;top:757.60px;font-size:14.3px;line-height:14.3px;font-weight:400;color:#4f4f4f;white-space:nowrap;letter-spacing:-0.1px;left:1260.41px;width:120px;text-align:center;">1-5M€</div>
<div style="position:absolute;top:757.60px;font-size:14.3px;line-height:14.3px;font-weight:400;color:#4f4f4f;white-space:nowrap;letter-spacing:-0.1px;left:1354.86px;width:120px;text-align:center;">5-50M€</div>
<div style="position:absolute;top:757.60px;font-size:14.3px;line-height:14.3px;font-weight:400;color:#4f4f4f;white-space:nowrap;letter-spacing:-0.1px;left:1449.30px;width:120px;text-align:center;">50-100M€</div>
<div style="position:absolute;top:757.60px;font-size:14.3px;line-height:14.3px;font-weight:400;color:#4f4f4f;white-space:nowrap;letter-spacing:-0.1px;left:1543.74px;width:120px;text-align:center;">100-500M€</div>
<div style="position:absolute;top:757.60px;font-size:14.3px;line-height:14.3px;font-weight:400;color:#4f4f4f;white-space:nowrap;letter-spacing:-0.1px;left:1638.19px;width:120px;text-align:center;">500M€-1B€</div>
<div style="position:absolute;top:757.60px;font-size:14.3px;line-height:14.3px;font-weight:400;color:#4f4f4f;white-space:nowrap;letter-spacing:-0.1px;left:1732.63px;width:120px;text-align:center;">>1B€</div>
<div style="position:absolute;top:757.60px;font-size:14.3px;line-height:14.3px;font-weight:400;color:#4f4f4f;white-space:nowrap;letter-spacing:-0.1px;left:1827.08px;width:120px;text-align:center;">null</div>
<div style="position:absolute;left:1363.50px;top:790.60px;width:15.5px;height:11.5px;background:#2161d6"></div>
<div style="position:absolute;top:785.76px;font-size:17.3px;line-height:17.3px;font-weight:400;color:#2161d6;white-space:nowrap;letter-spacing:-0.1px;left:1383.50px;">Companies</div>
<svg style="position:absolute;left:1481.50px;top:789.40px" width="18" height="12" viewBox="-1 -6 18 12"><line x1="0" y1="0" x2="15.5" y2="0" stroke="#d4a73e" stroke-width="2"/><circle cx="7.8" cy="0" r="2.9" fill="#fff" stroke="#d4a73e" stroke-width="1.9"/></svg>
<div style="position:absolute;top:785.76px;font-size:17.3px;line-height:17.3px;font-weight:400;color:#d4a73e;white-space:nowrap;letter-spacing:-0.1px;left:1503.00px;">Sales</div>
<svg style="position:absolute;left:1555.50px;top:789.40px" width="18" height="12" viewBox="-1 -6 18 12"><line x1="0" y1="0" x2="15.5" y2="0" stroke="#d24b93" stroke-width="2"/><circle cx="7.8" cy="0" r="2.9" fill="#fff" stroke="#d24b93" stroke-width="1.9"/></svg>
<div style="position:absolute;top:785.76px;font-size:17.3px;line-height:17.3px;font-weight:400;color:#d24b93;white-space:nowrap;letter-spacing:-0.1px;left:1577.00px;">Potential</div>
<div style="position:absolute;top:916.89px;font-size:17.5px;line-height:17.5px;font-weight:700;color:#262626;white-space:nowrap;letter-spacing:-0.09px;left:1084.70px;">Offering penetration, number of customers, net sales and average ARPA</div>
<svg style="position:absolute;left:0;top:0" width="2000" height="1417" viewBox="0 0 2000 1417"><line x1="1084" y1="973.8" x2="1934.5" y2="973.8" stroke="#c8c8c8" stroke-width="1.2" stroke-dasharray="1.3 1.3"/><line x1="1084" y1="1049" x2="1934.5" y2="1049" stroke="#c8c8c8" stroke-width="1.2" stroke-dasharray="1.3 1.3"/><line x1="1084" y1="1124.3" x2="1934.5" y2="1124.3" stroke="#c8c8c8" stroke-width="1.2" stroke-dasharray="1.3 1.3"/><line x1="1084" y1="1199.4" x2="1934.5" y2="1199.4" stroke="#c8c8c8" stroke-width="1.2" stroke-dasharray="1.3 1.3"/><rect x="1087.13" y="987.00" width="22.67" height="287.50" fill="#2161d6"/><rect x="1115.47" y="1137.00" width="22.67" height="137.50" fill="#2161d6"/><rect x="1143.80" y="1190.20" width="22.67" height="84.30" fill="#2161d6"/><rect x="1172.13" y="1216.40" width="22.67" height="58.10" fill="#2161d6"/><rect x="1200.47" y="1228.40" width="22.67" height="46.10" fill="#2161d6"/><rect x="1228.80" y="1224.00" width="22.67" height="50.50" fill="#2161d6"/><rect x="1257.13" y="1236.70" width="22.67" height="37.80" fill="#2161d6"/><rect x="1285.47" y="1250.00" width="22.67" height="24.50" fill="#2161d6"/><rect x="1313.80" y="1256.50" width="22.67" height="18.00" fill="#2161d6"/><rect x="1342.13" y="1257.60" width="22.67" height="16.90" fill="#2161d6"/><rect x="1370.47" y="1260.00" width="22.67" height="14.50" fill="#2161d6"/><rect x="1398.80" y="1260.70" width="22.67" height="13.80" fill="#2161d6"/><rect x="1427.13" y="1265.50" width="22.67" height="9.00" fill="#2161d6"/><rect x="1455.47" y="1266.00" width="22.67" height="8.50" fill="#2161d6"/><rect x="1483.80" y="1268.90" width="22.67" height="5.60" fill="#2161d6"/><rect x="1512.13" y="1269.00" width="22.67" height="5.50" fill="#2161d6"/><rect x="1540.47" y="1270.00" width="22.67" height="4.50" fill="#2161d6"/><rect x="1568.80" y="1271.50" width="22.67" height="3.00" fill="#2161d6"/><rect x="1597.13" y="1272.00" width="22.67" height="2.50" fill="#2161d6"/><rect x="1625.47" y="1272.50" width="22.67" height="2.00" fill="#2161d6"/><rect x="1653.80" y="1273.00" width="22.67" height="1.50" fill="#2161d6"/><rect x="1682.13" y="1273.30" width="22.67" height="1.20" fill="#2161d6"/><rect x="1710.47" y="1274.00" width="22.67" height="0.50" fill="#2161d6"/><line x1="1084" y1="1274.5" x2="1934.5" y2="1274.5" stroke="#666" stroke-width="1.3"/><line x1="1098.47" y1="1274.5" x2="1098.47" y2="1279.5" stroke="#666" stroke-width="1.2"/><line x1="1126.80" y1="1274.5" x2="1126.80" y2="1279.5" stroke="#666" stroke-width="1.2"/><line x1="1155.13" y1="1274.5" x2="1155.13" y2="1279.5" stroke="#666" stroke-width="1.2"/><line x1="1183.47" y1="1274.5" x2="1183.47" y2="1279.5" stroke="#666" stroke-width="1.2"/><line x1="1211.80" y1="1274.5" x2="1211.80" y2="1279.5" stroke="#666" stroke-width="1.2"/><line x1="1240.13" y1="1274.5" x2="1240.13" y2="1279.5" stroke="#666" stroke-width="1.2"/><line x1="1268.47" y1="1274.5" x2="1268.47" y2="1279.5" stroke="#666" stroke-width="1.2"/><line x1="1296.80" y1="1274.5" x2="1296.80" y2="1279.5" stroke="#666" stroke-width="1.2"/><line x1="1325.13" y1="1274.5" x2="1325.13" y2="1279.5" stroke="#666" stroke-width="1.2"/><line x1="1353.47" y1="1274.5" x2="1353.47" y2="1279.5" stroke="#666" stroke-width="1.2"/><line x1="1381.80" y1="1274.5" x2="1381.80" y2="1279.5" stroke="#666" stroke-width="1.2"/><line x1="1410.13" y1="1274.5" x2="1410.13" y2="1279.5" stroke="#666" stroke-width="1.2"/><line x1="1438.47" y1="1274.5" x2="1438.47" y2="1279.5" stroke="#666" stroke-width="1.2"/><line x1="1466.80" y1="1274.5" x2="1466.80" y2="1279.5" stroke="#666" stroke-width="1.2"/><line x1="1495.13" y1="1274.5" x2="1495.13" y2="1279.5" stroke="#666" stroke-width="1.2"/><line x1="1523.47" y1="1274.5" x2="1523.47" y2="1279.5" stroke="#666" stroke-width="1.2"/><line x1="1551.80" y1="1274.5" x2="1551.80" y2="1279.5" stroke="#666" stroke-width="1.2"/><line x1="1580.13" y1="1274.5" x2="1580.13" y2="1279.5" stroke="#666" stroke-width="1.2"/><line x1="1608.47" y1="1274.5" x2="1608.47" y2="1279.5" stroke="#666" stroke-width="1.2"/><line x1="1636.80" y1="1274.5" x2="1636.80" y2="1279.5" stroke="#666" stroke-width="1.2"/><line x1="1665.13" y1="1274.5" x2="1665.13" y2="1279.5" stroke="#666" stroke-width="1.2"/><line x1="1693.47" y1="1274.5" x2="1693.47" y2="1279.5" stroke="#666" stroke-width="1.2"/><line x1="1721.80" y1="1274.5" x2="1721.80" y2="1279.5" stroke="#666" stroke-width="1.2"/><line x1="1750.13" y1="1274.5" x2="1750.13" y2="1279.5" stroke="#666" stroke-width="1.2"/><line x1="1778.47" y1="1274.5" x2="1778.47" y2="1279.5" stroke="#666" stroke-width="1.2"/><line x1="1806.80" y1="1274.5" x2="1806.80" y2="1279.5" stroke="#666" stroke-width="1.2"/><line x1="1835.13" y1="1274.5" x2="1835.13" y2="1279.5" stroke="#666" stroke-width="1.2"/><line x1="1863.47" y1="1274.5" x2="1863.47" y2="1279.5" stroke="#666" stroke-width="1.2"/><line x1="1891.80" y1="1274.5" x2="1891.80" y2="1279.5" stroke="#666" stroke-width="1.2"/><line x1="1920.13" y1="1274.5" x2="1920.13" y2="1279.5" stroke="#666" stroke-width="1.2"/><polyline points="1098.47,1232.50 1126.80,1245.20 1155.13,1243.00 1183.47,1230.50 1211.80,1223.20 1240.13,1151.80 1268.47,1168.70 1296.80,1202.00 1325.13,1105.70 1353.47,1192.20 1381.80,1102.30 1410.13,1171.90 1438.47,1099.20 1466.80,1064.40 1495.13,1042.80 1523.47,1032.70 1551.80,1106.40 1580.13,1122.00 1608.47,1038.70 1636.80,976.10 1665.13,1013.30 1693.47,1111.70 1721.80,1042.10 1750.13,1135.20 1778.47,1153.90 1806.80,1202.40 1835.13,1230.50 1863.47,1250.90 1891.80,1274.40 1920.13,1258.80" fill="none" stroke="#d4a73e" stroke-width="2" stroke-linejoin="round"/><circle cx="1098.47" cy="1232.50" r="4.5" fill="#d4a73e"/><circle cx="1126.80" cy="1245.20" r="4.5" fill="#d4a73e"/><circle cx="1155.13" cy="1243.00" r="4.5" fill="#d4a73e"/><circle cx="1183.47" cy="1230.50" r="4.5" fill="#d4a73e"/><circle cx="1211.80" cy="1223.20" r="4.5" fill="#d4a73e"/><circle cx="1240.13" cy="1151.80" r="4.5" fill="#d4a73e"/><circle cx="1268.47" cy="1168.70" r="4.5" fill="#d4a73e"/><circle cx="1296.80" cy="1202.00" r="4.5" fill="#d4a73e"/><circle cx="1325.13" cy="1105.70" r="4.5" fill="#d4a73e"/><circle cx="1353.47" cy="1192.20" r="4.5" fill="#d4a73e"/><circle cx="1381.80" cy="1102.30" r="4.5" fill="#d4a73e"/><circle cx="1410.13" cy="1171.90" r="4.5" fill="#d4a73e"/><circle cx="1438.47" cy="1099.20" r="4.5" fill="#d4a73e"/><circle cx="1466.80" cy="1064.40" r="4.5" fill="#d4a73e"/><circle cx="1495.13" cy="1042.80" r="4.5" fill="#d4a73e"/><circle cx="1523.47" cy="1032.70" r="4.5" fill="#d4a73e"/><circle cx="1551.80" cy="1106.40" r="4.5" fill="#d4a73e"/><circle cx="1580.13" cy="1122.00" r="4.5" fill="#d4a73e"/><circle cx="1608.47" cy="1038.70" r="4.5" fill="#d4a73e"/><circle cx="1636.80" cy="976.10" r="4.5" fill="#d4a73e"/><circle cx="1665.13" cy="1013.30" r="4.5" fill="#d4a73e"/><circle cx="1693.47" cy="1111.70" r="4.5" fill="#d4a73e"/><circle cx="1721.80" cy="1042.10" r="4.5" fill="#d4a73e"/><circle cx="1750.13" cy="1135.20" r="4.5" fill="#d4a73e"/><circle cx="1778.47" cy="1153.90" r="4.5" fill="#d4a73e"/><circle cx="1806.80" cy="1202.40" r="4.5" fill="#d4a73e"/><circle cx="1835.13" cy="1230.50" r="4.5" fill="#d4a73e"/><circle cx="1863.47" cy="1250.90" r="4.5" fill="#d4a73e"/><circle cx="1891.80" cy="1274.40" r="4.5" fill="#d4a73e"/><circle cx="1920.13" cy="1258.80" r="4.5" fill="#d4a73e"/><polyline points="1098.47,1274.30 1126.80,1274.30 1155.13,1274.30 1183.47,1274.30 1211.80,1274.30 1240.13,1274.30 1268.47,1274.30 1296.80,1274.30 1325.13,1273.80 1353.47,1273.70 1381.80,1273.20 1410.13,1273.70 1438.47,1272.50 1466.80,1272.00 1495.13,1270.30 1523.47,1270.00 1551.80,1270.30 1580.13,1270.00 1608.47,1264.80 1636.80,1258.00 1665.13,1252.80 1693.47,1255.70 1721.80,1231.70 1750.13,1232.40 1778.47,1204.80 1806.80,1167.10 1835.13,1189.90 1863.47,1194.00 1891.80,1274.40 1920.13,1062.70" fill="none" stroke="#d24b93" stroke-width="2" stroke-linejoin="round"/><circle cx="1098.47" cy="1274.30" r="4.5" fill="#d24b93"/><circle cx="1126.80" cy="1274.30" r="4.5" fill="#d24b93"/><circle cx="1155.13" cy="1274.30" r="4.5" fill="#d24b93"/><circle cx="1183.47" cy="1274.30" r="4.5" fill="#d24b93"/><circle cx="1211.80" cy="1274.30" r="4.5" fill="#d24b93"/><circle cx="1240.13" cy="1274.30" r="4.5" fill="#d24b93"/><circle cx="1268.47" cy="1274.30" r="4.5" fill="#d24b93"/><circle cx="1296.80" cy="1274.30" r="4.5" fill="#d24b93"/><circle cx="1325.13" cy="1273.80" r="4.5" fill="#d24b93"/><circle cx="1353.47" cy="1273.70" r="4.5" fill="#d24b93"/><circle cx="1381.80" cy="1273.20" r="4.5" fill="#d24b93"/><circle cx="1410.13" cy="1273.70" r="4.5" fill="#d24b93"/><circle cx="1438.47" cy="1272.50" r="4.5" fill="#d24b93"/><circle cx="1466.80" cy="1272.00" r="4.5" fill="#d24b93"/><circle cx="1495.13" cy="1270.30" r="4.5" fill="#d24b93"/><circle cx="1523.47" cy="1270.00" r="4.5" fill="#d24b93"/><circle cx="1551.80" cy="1270.30" r="4.5" fill="#d24b93"/><circle cx="1580.13" cy="1270.00" r="4.5" fill="#d24b93"/><circle cx="1608.47" cy="1264.80" r="4.5" fill="#d24b93"/><circle cx="1636.80" cy="1258.00" r="4.5" fill="#d24b93"/><circle cx="1665.13" cy="1252.80" r="4.5" fill="#d24b93"/><circle cx="1693.47" cy="1255.70" r="4.5" fill="#d24b93"/><circle cx="1721.80" cy="1231.70" r="4.5" fill="#d24b93"/><circle cx="1750.13" cy="1232.40" r="4.5" fill="#d24b93"/><circle cx="1778.47" cy="1204.80" r="4.5" fill="#d24b93"/><circle cx="1806.80" cy="1167.10" r="4.5" fill="#d24b93"/><circle cx="1835.13" cy="1189.90" r="4.5" fill="#d24b93"/><circle cx="1863.47" cy="1194.00" r="4.5" fill="#d24b93"/><circle cx="1891.80" cy="1274.40" r="4.5" fill="#d24b93"/><circle cx="1920.13" cy="1062.70" r="4.5" fill="#d24b93"/></svg>
<div style="position:absolute;top:1281.60px;font-size:14.3px;line-height:14.3px;font-weight:400;color:#4f4f4f;white-space:nowrap;letter-spacing:-0.1px;left:1038.47px;width:120px;text-align:center;">1</div>
<div style="position:absolute;top:1281.60px;font-size:14.3px;line-height:14.3px;font-weight:400;color:#4f4f4f;white-space:nowrap;letter-spacing:-0.1px;left:1066.80px;width:120px;text-align:center;">2</div>
<div style="position:absolute;top:1281.60px;font-size:14.3px;line-height:14.3px;font-weight:400;color:#4f4f4f;white-space:nowrap;letter-spacing:-0.1px;left:1095.13px;width:120px;text-align:center;">3</div>
<div style="position:absolute;top:1281.60px;font-size:14.3px;line-height:14.3px;font-weight:400;color:#4f4f4f;white-space:nowrap;letter-spacing:-0.1px;left:1123.47px;width:120px;text-align:center;">4</div>
<div style="position:absolute;top:1281.60px;font-size:14.3px;line-height:14.3px;font-weight:400;color:#4f4f4f;white-space:nowrap;letter-spacing:-0.1px;left:1151.80px;width:120px;text-align:center;">5</div>
<div style="position:absolute;top:1281.60px;font-size:14.3px;line-height:14.3px;font-weight:400;color:#4f4f4f;white-space:nowrap;letter-spacing:-0.1px;left:1180.13px;width:120px;text-align:center;">6</div>
<div style="position:absolute;top:1281.60px;font-size:14.3px;line-height:14.3px;font-weight:400;color:#4f4f4f;white-space:nowrap;letter-spacing:-0.1px;left:1208.47px;width:120px;text-align:center;">7</div>
<div style="position:absolute;top:1281.60px;font-size:14.3px;line-height:14.3px;font-weight:400;color:#4f4f4f;white-space:nowrap;letter-spacing:-0.1px;left:1236.80px;width:120px;text-align:center;">8</div>
<div style="position:absolute;top:1281.60px;font-size:14.3px;line-height:14.3px;font-weight:400;color:#4f4f4f;white-space:nowrap;letter-spacing:-0.1px;left:1265.13px;width:120px;text-align:center;">9</div>
<div style="position:absolute;top:1281.60px;font-size:14.3px;line-height:14.3px;font-weight:400;color:#4f4f4f;white-space:nowrap;letter-spacing:-0.1px;left:1293.47px;width:120px;text-align:center;">10</div>
<div style="position:absolute;top:1281.60px;font-size:14.3px;line-height:14.3px;font-weight:400;color:#4f4f4f;white-space:nowrap;letter-spacing:-0.1px;left:1321.80px;width:120px;text-align:center;">11</div>
<div style="position:absolute;top:1281.60px;font-size:14.3px;line-height:14.3px;font-weight:400;color:#4f4f4f;white-space:nowrap;letter-spacing:-0.1px;left:1350.13px;width:120px;text-align:center;">12</div>
<div style="position:absolute;top:1281.60px;font-size:14.3px;line-height:14.3px;font-weight:400;color:#4f4f4f;white-space:nowrap;letter-spacing:-0.1px;left:1378.47px;width:120px;text-align:center;">13</div>
<div style="position:absolute;top:1281.60px;font-size:14.3px;line-height:14.3px;font-weight:400;color:#4f4f4f;white-space:nowrap;letter-spacing:-0.1px;left:1406.80px;width:120px;text-align:center;">14</div>
<div style="position:absolute;top:1281.60px;font-size:14.3px;line-height:14.3px;font-weight:400;color:#4f4f4f;white-space:nowrap;letter-spacing:-0.1px;left:1435.13px;width:120px;text-align:center;">15</div>
<div style="position:absolute;top:1281.60px;font-size:14.3px;line-height:14.3px;font-weight:400;color:#4f4f4f;white-space:nowrap;letter-spacing:-0.1px;left:1463.47px;width:120px;text-align:center;">16</div>
<div style="position:absolute;top:1281.60px;font-size:14.3px;line-height:14.3px;font-weight:400;color:#4f4f4f;white-space:nowrap;letter-spacing:-0.1px;left:1491.80px;width:120px;text-align:center;">17</div>
<div style="position:absolute;top:1281.60px;font-size:14.3px;line-height:14.3px;font-weight:400;color:#4f4f4f;white-space:nowrap;letter-spacing:-0.1px;left:1520.13px;width:120px;text-align:center;">18</div>
<div style="position:absolute;top:1281.60px;font-size:14.3px;line-height:14.3px;font-weight:400;color:#4f4f4f;white-space:nowrap;letter-spacing:-0.1px;left:1548.47px;width:120px;text-align:center;">19</div>
<div style="position:absolute;top:1281.60px;font-size:14.3px;line-height:14.3px;font-weight:400;color:#4f4f4f;white-space:nowrap;letter-spacing:-0.1px;left:1576.80px;width:120px;text-align:center;">20</div>
<div style="position:absolute;top:1281.60px;font-size:14.3px;line-height:14.3px;font-weight:400;color:#4f4f4f;white-space:nowrap;letter-spacing:-0.1px;left:1605.13px;width:120px;text-align:center;">21</div>
<div style="position:absolute;top:1281.60px;font-size:14.3px;line-height:14.3px;font-weight:400;color:#4f4f4f;white-space:nowrap;letter-spacing:-0.1px;left:1633.47px;width:120px;text-align:center;">22</div>
<div style="position:absolute;top:1281.60px;font-size:14.3px;line-height:14.3px;font-weight:400;color:#4f4f4f;white-space:nowrap;letter-spacing:-0.1px;left:1661.80px;width:120px;text-align:center;">23</div>
<div style="position:absolute;top:1281.60px;font-size:14.3px;line-height:14.3px;font-weight:400;color:#4f4f4f;white-space:nowrap;letter-spacing:-0.1px;left:1690.13px;width:120px;text-align:center;">24</div>
<div style="position:absolute;top:1281.60px;font-size:14.3px;line-height:14.3px;font-weight:400;color:#4f4f4f;white-space:nowrap;letter-spacing:-0.1px;left:1718.47px;width:120px;text-align:center;">25</div>
<div style="position:absolute;top:1281.60px;font-size:14.3px;line-height:14.3px;font-weight:400;color:#4f4f4f;white-space:nowrap;letter-spacing:-0.1px;left:1746.80px;width:120px;text-align:center;">26</div>
<div style="position:absolute;top:1281.60px;font-size:14.3px;line-height:14.3px;font-weight:400;color:#4f4f4f;white-space:nowrap;letter-spacing:-0.1px;left:1775.13px;width:120px;text-align:center;">27</div>
<div style="position:absolute;top:1281.60px;font-size:14.3px;line-height:14.3px;font-weight:400;color:#4f4f4f;white-space:nowrap;letter-spacing:-0.1px;left:1803.47px;width:120px;text-align:center;">28</div>
<div style="position:absolute;top:1281.60px;font-size:14.3px;line-height:14.3px;font-weight:400;color:#4f4f4f;white-space:nowrap;letter-spacing:-0.1px;left:1831.80px;width:120px;text-align:center;">29</div>
<div style="position:absolute;top:1281.60px;font-size:14.3px;line-height:14.3px;font-weight:400;color:#4f4f4f;white-space:nowrap;letter-spacing:-0.1px;left:1860.13px;width:120px;text-align:center;">30</div>
<div style="position:absolute;left:1378.80px;top:1314.50px;width:15.5px;height:11.5px;background:#2161d6"></div>
<div style="position:absolute;top:1309.66px;font-size:17.3px;line-height:17.3px;font-weight:400;color:#2161d6;white-space:nowrap;letter-spacing:-0.1px;left:1398.80px;">Companies</div>
<svg style="position:absolute;left:1496.80px;top:1313.30px" width="18" height="12" viewBox="-1 -6 18 12"><line x1="0" y1="0" x2="15.5" y2="0" stroke="#d4a73e" stroke-width="2"/><circle cx="7.8" cy="0" r="2.9" fill="#fff" stroke="#d4a73e" stroke-width="1.9"/></svg>
<div style="position:absolute;top:1309.66px;font-size:17.3px;line-height:17.3px;font-weight:400;color:#d4a73e;white-space:nowrap;letter-spacing:-0.1px;left:1518.30px;">Sales</div>
<svg style="position:absolute;left:1570.30px;top:1313.30px" width="18" height="12" viewBox="-1 -6 18 12"><line x1="0" y1="0" x2="15.5" y2="0" stroke="#d24b93" stroke-width="2"/><circle cx="7.8" cy="0" r="2.9" fill="#fff" stroke="#d24b93" stroke-width="1.9"/></svg>
<div style="position:absolute;top:1309.66px;font-size:17.3px;line-height:17.3px;font-weight:400;color:#d24b93;white-space:nowrap;letter-spacing:-0.1px;left:1591.80px;">Arpa</div>
</body></html>
